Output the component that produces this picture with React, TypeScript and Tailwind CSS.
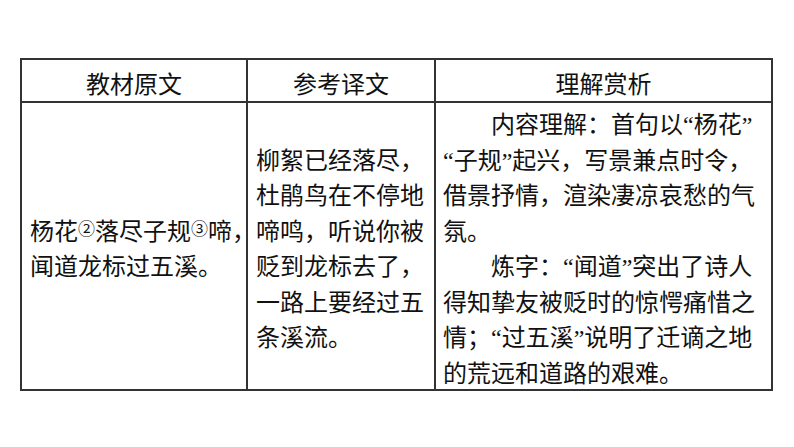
const font = { fontFamily: '"Liberation Serif", "Noto Sans CJK SC", serif' };

function Num({ n }: { n: string }) {
  return <span className="text-[17px] leading-none align-[5px]">{n}</span>;
}

const col2 = ["柳絮已经落尽，", "杜鹃鸟在不停地", "啼鸣，听说你被", "贬到龙标去了，", "一路上要经过五", "条溪流。"];

const col3: { text: string; indent?: boolean }[] = [
  { text: "内容理解：首句以“杨花”", indent: true },
  { text: "“子规”起兴，写景兼点时令，" },
  { text: "借景抒情，渲染凄凉哀愁的气" },
  { text: "氛。" },
  { text: "炼字：“闻道”突出了诗人", indent: true },
  { text: "得知挚友被贬时的惊愕痛惜之" },
  { text: "情；“过五溪”说明了迁谪之地" },
  { text: "的荒远和道路的艰难。" },
];

export default function App() {
  return (
    <div className="w-[794px] h-[447px] bg-white text-[#111] pt-[58px] pl-[20px]" style={font}>
      <div className="w-[753px] border-2 border-[#333] grid grid-cols-[226px_188px_335px] text-[24px]">
        <div className="h-[43px] border-r-2 border-b-2 border-[#333] flex items-center justify-center pt-[9px]">教材原文</div>
        <div className="h-[43px] border-r-2 border-b-2 border-[#333] flex items-center justify-center pt-[9px]">参考译文</div>
        <div className="h-[43px] border-b-2 border-[#333] flex items-center justify-center pt-[9px]">理解赏析</div>

        <div className="h-[286px] border-r-2 border-[#333] flex flex-col justify-center pl-[8px] pt-[8px] leading-[35.5px] whitespace-nowrap">
          <div>
            杨花<Num n="②" />落尽子规<Num n="③" />啼，
          </div>
          <div>闻道龙标过五溪。</div>
        </div>

        <div className="h-[286px] border-r-2 border-[#333] flex flex-col justify-center pl-[8px] pt-[8px] leading-[35.5px] whitespace-nowrap">
          {col2.map((l) => (
            <div key={l}>{l}</div>
          ))}
        </div>

        <div className="h-[286px] pl-[7px] pt-[5px] leading-[35.5px] whitespace-nowrap">
          {col3.map((l) => (
            <div key={l.text} className={l.indent ? "indent-[48px]" : ""}>
              {l.text}
            </div>
          ))}
        </div>
      </div>
    </div>
  );
}
